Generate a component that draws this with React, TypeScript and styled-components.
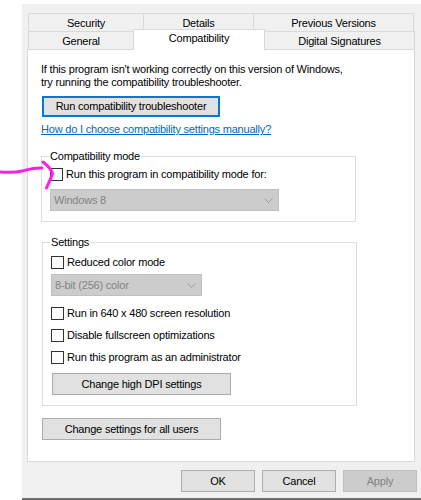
import React from "react";
import styled, { createGlobalStyle } from "styled-components";

const GlobalStyle = createGlobalStyle`
  html, body {
    margin: 0;
    padding: 0;
    background: #ffffff;
  }
  body {
    font-family: "Liberation Sans", Arial, sans-serif;
    font-size: 11px;
    letter-spacing: -0.2px;
    color: #000000;
  }
`;

const Root = styled.div`
  position: relative;
  width: 421px;
  height: 500px;
  overflow: hidden;
`;

const Dialog = styled.div`
  box-sizing: border-box;
  margin: 4px 0 0 22px;
  height: 496px;
  padding: 9px 0 0 5px;
  background: #f0f0f0;
  border-bottom: 2px solid #6d6d6d;
`;

const Tabs = styled.div`
  padding-left: 1px;
`;

const TabRow = styled.div`
  display: flex;
  align-items: flex-end;
  height: 18px;
`;

const Tab = styled.div<{ $w: number; $active?: boolean }>`
  box-sizing: border-box;
  width: ${(p) => p.$w}px;
  height: ${(p) => (p.$active ? 21 : 18)}px;
  padding-top: ${(p) => (p.$active ? 2 : 3)}px;
  line-height: 13px;
  text-align: center;
  white-space: nowrap;
  border: 1px solid #d9d9d9;
  border-bottom: none;
  background: ${(p) => (p.$active ? "#ffffff" : "#f0f0f0")};
  margin-bottom: ${(p) => (p.$active ? -1 : 0)}px;
  position: relative;
  z-index: ${(p) => (p.$active ? 1 : 0)};
  & + & {
    margin-left: -1px;
  }
`;

const Panel = styled.div`
  box-sizing: border-box;
  width: 388px;
  height: 413px;
  margin-left: 0;
  padding: 13px 0 0 13px;
  background: #ffffff;
  border: 1px solid #d9d9d9;
`;

const Intro = styled.p`
  margin: 0;
  line-height: 13px;
`;

const Button = styled.button<{ $w: number; $h?: number; $focused?: boolean; $shift?: number }>`
  box-sizing: border-box;
  display: block;
  width: ${(p) => p.$w}px;
  height: ${(p) => p.$h ?? 22}px;
  margin: 0 0 0 ${(p) => p.$shift ?? 0}px;
  padding: 0;
  font: inherit;
  letter-spacing: inherit;
  line-height: 13px;
  color: #000000;
  background: #e1e1e1;
  border: ${(p) => (p.$focused ? "2px solid #0078d7" : "1px solid #adadad")};
  border-radius: 0;
  &:disabled {
    background: #cccccc;
    border-color: #bfbfbf;
    color: #838383;
  }
`;

const TopButton = styled(Button)`
  margin-top: 7px;
`;

const HelpLink = styled.a`
  display: inline-block;
  margin-top: 6px;
  line-height: 13px;
  color: #0066cc;
  text-decoration: underline;
`;

const Group = styled.fieldset<{ $shift?: number; $top: number }>`
  box-sizing: border-box;
  width: 315px;
  margin: ${(p) => p.$top}px 0 0 ${(p) => p.$shift ?? 0}px;
  padding: 3px 8px 10px 8px;
  border: 1px solid #dcdcdc;
  min-width: 0;
`;

const Legend = styled.legend`
  padding: 1px 1px 0;
  margin-left: -1px;
  line-height: 13px;
`;

const CheckRow = styled.label<{ $gap?: number }>`
  display: flex;
  align-items: center;
  gap: 3px;
  height: 16px;
  margin-top: ${(p) => p.$gap ?? 0}px;
  line-height: 13px;
  white-space: nowrap;
`;

const Box = styled.span`
  box-sizing: border-box;
  flex: none;
  width: 13px;
  height: 13px;
  background: #ffffff;
  border: 1px solid #333333;
`;

const Select = styled.div<{ $w: number; $gap: number }>`
  box-sizing: border-box;
  display: flex;
  align-items: center;
  justify-content: space-between;
  width: ${(p) => p.$w}px;
  height: 22px;
  margin-top: ${(p) => p.$gap}px;
  padding: 0 5px 0 3px;
  line-height: 13px;
  color: #838383;
  background: #cccccc;
  border: 1px solid #bfbfbf;
`;

const Footer = styled.div`
  display: flex;
  justify-content: flex-end;
  gap: 7px;
  margin-top: 8px;
  padding-right: 4px;
`;

const Scribble = styled.svg`
  position: absolute;
  left: 0;
  top: 158px;
  pointer-events: none;
`;

const Chevron = () => (
  <svg width="9" height="5" viewBox="0 0 9 5">
    <polyline points="0.5,0.5 4.5,4.5 8.5,0.5" fill="none" stroke="#9d9d9d" strokeWidth="1" />
  </svg>
);

const Check: React.FC<{ label: string; gap?: number }> = ({ label, gap }) => (
  <CheckRow $gap={gap}>
    <Box />
    <span>{label}</span>
  </CheckRow>
);

const Dropdown: React.FC<{ value: string; width: number; gap: number }> = ({ value, width, gap }) => (
  <Select $w={width} $gap={gap}>
    <span>{value}</span>
    <Chevron />
  </Select>
);

export default function App() {
  return (
    <Root>
      <GlobalStyle />
      <Dialog>
        <Tabs>
          <TabRow>
            <Tab $w={116}>Security</Tab>
            <Tab $w={111}>Details</Tab>
            <Tab $w={161}>Previous Versions</Tab>
          </TabRow>
          <TabRow>
            <Tab $w={106}>General</Tab>
            <Tab $w={132} $active>
              Compatibility
            </Tab>
            <Tab $w={151}>Digital Signatures</Tab>
          </TabRow>
        </Tabs>
        <Panel>
          <Intro>
            If this program isn't working correctly on this version of Windows,
            <br />
            try running the compatibility troubleshooter.
          </Intro>
          <TopButton $w={178} $h={21} $focused $shift={1}>
            Run compatibility troubleshooter
          </TopButton>
          <HelpLink href="#">How do I choose compatibility settings manually?</HelpLink>

          <Group $top={13}>
            <Legend>Compatibility mode</Legend>
            <Check label="Run this program in compatibility mode for:" />
            <Dropdown value="Windows 8" width={229} gap={7} />
          </Group>

          <Group $top={13} $shift={1}>
            <Legend>Settings</Legend>
            <Check label="Reduced color mode" gap={2} />
            <Dropdown value="8-bit (256) color" width={151} gap={4} />
            <Check label="Run in 640 x 480 screen resolution" gap={9} />
            <Check label="Disable fullscreen optimizations" gap={6} />
            <Check label="Run this program as an administrator" gap={6} />
            <ButtonGap>
              <Button $w={179} $shift={1}>
                Change high DPI settings
              </Button>
            </ButtonGap>
          </Group>

          <ButtonGap $top={12}>
            <Button $w={179} $shift={1}>
              Change settings for all users
            </Button>
          </ButtonGap>
        </Panel>
        <Footer>
          <Button $w={74}>OK</Button>
          <Button $w={74}>Cancel</Button>
          <Button $w={74} disabled>
            Apply
          </Button>
        </Footer>
      </Dialog>
      <Scribble width="60" height="36" viewBox="0 0 60 36">
        <path
          d="M0,14 C8,14.5 16,14.5 22,13 C28,11.5 34,9.5 42,10"
          fill="none"
          stroke="#ff1ee8"
          strokeWidth="3"
          strokeLinecap="round"
        />
        <path
          d="M43,4 C47,7 51,11 52.5,15.5 C51,21 48,26 46.5,30"
          fill="none"
          stroke="#ff1ee8"
          strokeWidth="3"
          strokeLinecap="round"
        />
      </Scribble>
    </Root>
  );
}

const ButtonGap = styled.div<{ $top?: number }>`
  margin-top: ${(p) => p.$top ?? 8}px;
`;
